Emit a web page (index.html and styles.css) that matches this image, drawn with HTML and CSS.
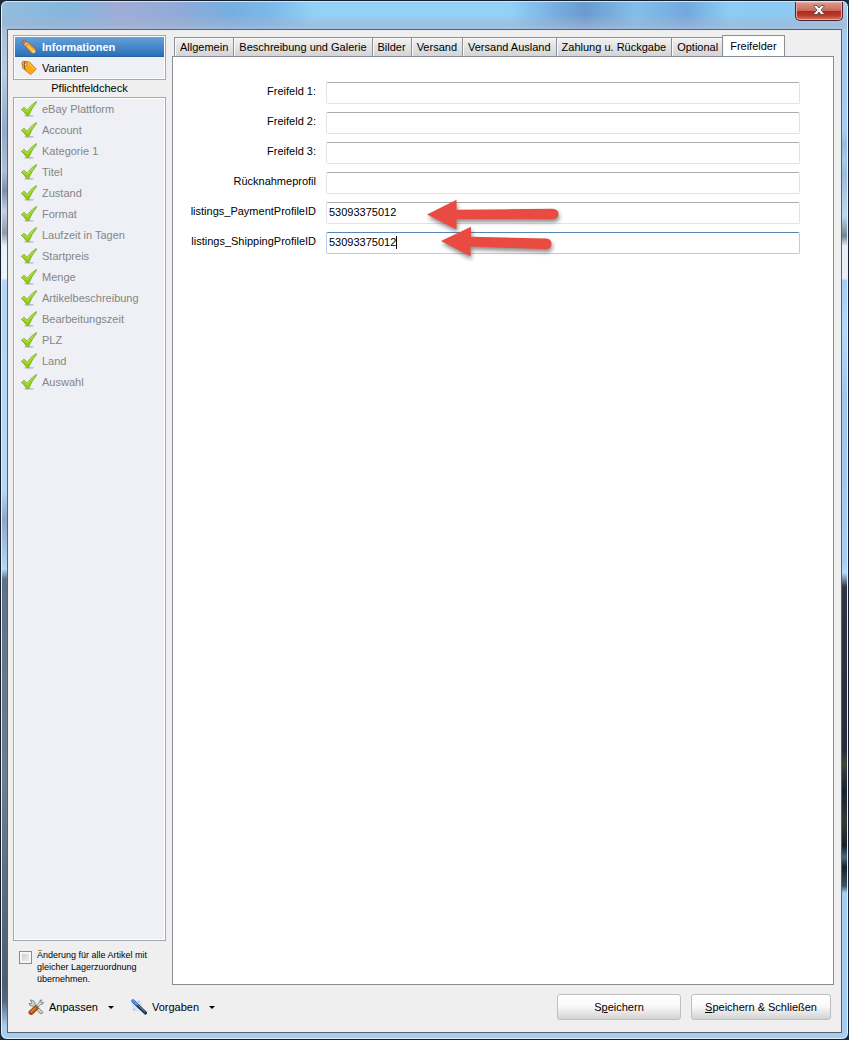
FILE: index.html
```html
<!DOCTYPE html>
<html lang="de">
<head>
  <meta charset="UTF-8">
  <title>Freifelder</title>
  <meta name="viewport" content="width=device-width, initial-scale=1.0">
  <link rel="stylesheet" href="styles.css">
</head>
<body>

  <svg width="0" height="0" class="defs" aria-hidden="true">
    <defs>
      <linearGradient id="green" x1="0" y1="0" x2="0" y2="1">
        <stop offset="0" stop-color="#a4d63a"/>
        <stop offset="1" stop-color="#8fcb0c"/>
      </linearGradient>
      <symbol id="check" viewBox="0 0 16 16">
        <ellipse cx="8" cy="14.8" rx="5" ry=".9" fill="#b9bcc0"/>
        <path d="M.4 8.400 3 6.200 6.200 9.200Q9.500 4 15.300.5L15.800 1.200Q11 6.600 7.800 14.200L5.700 14.400Q3.500 10.900.4 8.400Z" fill="url(#green)" stroke="#6fa31c" stroke-width=".7"/>
        <path d="M2 8.200 3 7.400 6.300 10.700Q9 6.300 13 3" fill="none" stroke="#c9ec6a" stroke-width=".7"/>
      </symbol>
    </defs>
  </svg>

  <div class="window">
    <header class="titlebar">
      <button class="close" aria-label="Schließen">
        <svg width="12" height="10" viewBox="0 0 12 10"><path d="M1 .5H4L6 3 8 .5H11V1.500L8 5 11 8.500V9.500H8L6 7 4 9.500H1V8.500L4 5 1 1.500Z" fill="#fff" stroke="#5a4850" stroke-width=".9"/></svg>
      </button>
    </header>

    <div class="client">
      <div class="main">
        <aside class="sidebar">
          <nav class="box">
            <a href="#" class="item active">
              <svg class="icon" viewBox="0 0 16 16">
                <path d="M1 3.500Q1.200 1.200 3.700.8L6.400 3.300 3.500 6.200Z" fill="#d8765d" stroke="#a34a35" stroke-width=".7"/>
                <path d="M3.200 5.700 6 2.900 7.300 4.200 4.500 7Z" fill="#e0e3e6" stroke="#888" stroke-width=".5"/>
                <path d="M4.300 7.200 7.500 4 14.200 10 15 15 10 13.500Z" fill="#f9a51d" stroke="#b86708" stroke-width=".7"/>
                <path d="M6.500 6.500 12 12" stroke="#ffd36b" stroke-width="1.200"/>
                <path d="M10.500 13.200 13.800 10.500 14.900 14.900Z" fill="#f4d7a0"/>
                <path d="M13 14.300 14.500 13 15 15Z" fill="#333"/>
              </svg>
              Informationen
            </a>
            <a href="#" class="item">
              <svg class="icon" viewBox="0 0 16 16">
                <path d="M1 3Q1 1.500 2.500 1.300L7.500 1.800Q8.300 2 9 2.700L14.800 8.400Q15.400 9 14.800 9.600L10.200 14.100Q9.500 14.600 8.900 14L2.200 8.600Q1.600 8 1.500 7.200Z" fill="#fba91b" stroke="#c87608" stroke-width=".9"/>
                <path d="M7.500 3.200 13.400 9" stroke="#ffd268" stroke-width="1"/>
                <circle cx="4.500" cy="4.300" r="1.200" fill="#fff" stroke="#77511a" stroke-width=".6"/>
                <path d="M3.900 1.500Q2.500 5 4.100 9.500" fill="none" stroke="#765a33" stroke-width="1"/>
              </svg>
              Varianten
            </a>
          </nav>
          <div class="caption">Pflichtfeldcheck</div>
          <ul class="box checks">
            <li class="item"><svg class="icon"><use href="#check"/></svg>eBay Plattform</li>
            <li class="item"><svg class="icon"><use href="#check"/></svg>Account</li>
            <li class="item"><svg class="icon"><use href="#check"/></svg>Kategorie 1</li>
            <li class="item"><svg class="icon"><use href="#check"/></svg>Titel</li>
            <li class="item"><svg class="icon"><use href="#check"/></svg>Zustand</li>
            <li class="item"><svg class="icon"><use href="#check"/></svg>Format</li>
            <li class="item"><svg class="icon"><use href="#check"/></svg>Laufzeit in Tagen</li>
            <li class="item"><svg class="icon"><use href="#check"/></svg>Startpreis</li>
            <li class="item"><svg class="icon"><use href="#check"/></svg>Menge</li>
            <li class="item"><svg class="icon"><use href="#check"/></svg>Artikelbeschreibung</li>
            <li class="item"><svg class="icon"><use href="#check"/></svg>Bearbeitungszeit</li>
            <li class="item"><svg class="icon"><use href="#check"/></svg>PLZ</li>
            <li class="item"><svg class="icon"><use href="#check"/></svg>Land</li>
            <li class="item"><svg class="icon"><use href="#check"/></svg>Auswahl</li>
          </ul>
          <div class="apply">
            <input type="checkbox" id="applyAll">
            <label for="applyAll">Änderung für alle Artikel mit gleicher Lagerzuordnung übernehmen.</label>
          </div>
        </aside>

        <section class="content">
          <div class="tabs" role="tablist">
            <button class="tab" role="tab">Allgemein</button>
            <button class="tab" role="tab">Beschreibung und Galerie</button>
            <button class="tab" role="tab">Bilder</button>
            <button class="tab" role="tab">Versand</button>
            <button class="tab" role="tab">Versand Ausland</button>
            <button class="tab" role="tab">Zahlung u. Rückgabe</button>
            <button class="tab" role="tab">Optional</button>
            <button class="tab selected" role="tab" aria-selected="true">Freifelder</button>
          </div>
          <form class="panel">
            <div class="row">
              <label for="f1">Freifeld 1:</label>
              <div class="field"><input type="text" id="f1"></div>
            </div>
            <div class="row">
              <label for="f2">Freifeld 2:</label>
              <div class="field"><input type="text" id="f2"></div>
            </div>
            <div class="row">
              <label for="f3">Freifeld 3:</label>
              <div class="field"><input type="text" id="f3"></div>
            </div>
            <div class="row">
              <label for="f4">Rücknahmeprofil</label>
              <div class="field"><input type="text" id="f4"></div>
            </div>
            <div class="row">
              <label for="f5">listings_PaymentProfileID</label>
              <div class="field"><input type="text" id="f5" value="53093375012"></div>
            </div>
            <div class="row">
              <label for="f6">listings_ShippingProfileID</label>
              <div class="field focused"><input type="text" id="f6" value="53093375012"><span class="caret"></span></div>
            </div>
            <svg class="arrows" width="150" height="70" viewBox="420 195 150 70" aria-hidden="true">
              <path d="M427 214.500 456.500 199.800V209.800L552.500 208.800Q558.500 209 558.500 214 558.500 219 552.500 219.200L456.500 219V229.500Z"/>
              <path d="M441 241 471 226.800V236.800L546.500 238.600Q551.500 239.300 551.500 244 551 249 546.500 249.300L470.500 246.500V256.300Z"/>
            </svg>
          </form>
        </section>
      </div>

      <footer class="footer">
        <button class="tool">
          <svg class="icon" viewBox="0 0 16 16">
            <path d="M2 1 3.800 3 3 4.800 1 4.300Q.8 7 4.400 7L12.200 14.500Q14.500 15.500 15 13.200L7.200 5.600Q7.400 1 2 1Z" fill="#c8d0cf" stroke="#6e7978" stroke-width=".8"/>
            <path d="M8.500 6 11.300 3.300Q11.500 1 14 .8L12.700 2.800 13.500 4 15.300 3Q15.500 5.700 12.500 5.600L10.200 8Z" fill="#d8dedd" stroke="#6e7978" stroke-width=".8"/>
            <path d="M1.800 15.200Q.2 14 1 12.400L7.600 6.400 10.500 9.200 4.600 15.200Q3 16.200 1.800 15.200Z" fill="#b9581a" stroke="#7d390b" stroke-width=".8"/>
            <path d="M3 13 7.600 8.600" stroke="#f0a55d" stroke-width="1"/>
          </svg>
          Anpassen
          <span class="drop"></span>
        </button>
        <button class="tool">
          <svg class="icon" viewBox="0 0 16 16">
            <circle cx="6" cy="7" r="5.500" fill="#d6e5f8"/>
            <path d="M2 2 14.500 14" stroke="#26384e" stroke-width="3.200" stroke-linecap="round"/>
            <path d="M2 1.800 5.500 5" stroke="#4f90e8" stroke-width="3" stroke-linecap="round"/>
            <path d="M5.500 4.500 14 12.800" stroke="#7f9dbd" stroke-width=".9"/>
            <path d="M8 1V4M6.500 2.500H9.500M3 9V12M1.500 10.500H4.500" stroke="#a8c9f5" stroke-width=".7"/>
          </svg>
          Vorgaben
          <span class="drop"></span>
        </button>
        <div class="actions">
          <button class="btn">S<u>p</u>eichern</button>
          <button class="btn wide"><u>S</u>peichern &amp; Schließen</button>
        </div>
      </footer>
    </div>
  </div>

</body>
</html>
```

FILE: styles.css
```css
* { box-sizing: border-box; }
body {
  margin: 0;
  background: #1b2c42;
  font-family: "Liberation Sans", Arial, sans-serif;
  font-size: 11px;
  color: #000;
}
button, input {
  font: inherit;
  color: inherit;
}
.defs {
  position: absolute;
}

/* glass frame */
.window {
  display: flex;
  flex-direction: column;
  min-height: 100vh;
  padding: 0 6px 6px;
  border: 1px solid #15202c;
  border-radius: 7px;
  box-shadow: inset 0 0 0 1px #e4f1fb;
  background:
    linear-gradient(#a9cdf0, #a9cdf0) bottom / 100% 6px no-repeat,
    linear-gradient(to bottom, #9fb4cc 0, #b9cde2 70px, #94aac8 130px, #aec0d8 170px, #7f8fa8 190px, #c3d2e4 210px, #8d9aaa 232px, #e8f1fa 245px, #eef5fb 277px, #b4d5f8 280px, #b7d7f9 490px, #8ea9cb 518px, #9fbbdd 540px, #b4d8f9 568px, #5f7386 578px, #6c7f90 780px, #4c5f70 980px, #55687a 1000px, #a9cdf0 1025px) left / 7px 100% no-repeat,
    linear-gradient(to bottom, #a3cbee 0, #a7cdf0 130px, #9bb9dc 143px, #a3cbee 160px, #9fbbdc 173px, #bcd8ee 215px, #6f8791 235px, #e6eff8 245px, #e6eff8 277px, #a5cdf3 280px, #b5d7fa 330px, #a0c5ea 400px, #a8cef4 560px, #b6d9fa 572px, #2b3640 586px, #252f39 750px, #3e4540 762px, #15212c 790px, #333b38 820px, #15212c 845px, #526a7e 856px, #15212c 866px, #3f5265 885px, #a5cdf3 892px) right / 7px 100% no-repeat,
    #a9cdf0;
}
.titlebar {
  display: flex;
  justify-content: flex-end;
  align-items: flex-start;
  height: 28px;
  margin: 0 -5px;
  padding-right: 4px;
  border-top: 1px solid #cfe6f8;
  border-radius: 6px 6px 0 0;
  background:
    linear-gradient(to bottom, rgba(255,255,255,0.05) 45%, rgba(165,182,212,0.6) 85%, rgba(175,192,215,0.7)),
    linear-gradient(to right, #8bb9dc 0, #7fb2dc 8%, #9aa9d4 14%, #8ea6d4 20%, #6faadf 27%, #74b6e8 32%, #8dd0f5 37%, #8dd0f5 60%, #72ade0 65%, #6295cc 69%, #7cbbe9 75%, #6ba4dc 81%, #86caf3 86%, #86c7f0 92%, #a0c9ea 100%);
}
.close {
  width: 48px;
  height: 19px;
  padding: 0;
  border: 1px solid #55202c;
  border-top: 0;
  border-radius: 0 0 5px 5px;
  box-shadow: inset 0 0 0 1px #e5aaa0;
  background: linear-gradient(#dc9d8f 0, #c9695c 48%, #ad271c 50%, #b93c2a 75%, #d67a5e 100%);
}
.client {
  flex: 1;
  display: flex;
  flex-direction: column;
  border: 1px solid #56636f;
  background: #efefef;
}
.main {
  flex: 1;
  display: flex;
  gap: 6px;
  padding: 5px 7px 0 5px;
}

/* sidebar */
.sidebar {
  display: flex;
  flex-direction: column;
  width: 153px;
}
.box {
  margin: 0;
  padding: 1px;
  border: 1px solid #a5a7ac;
  background: #eef0f5;
  box-shadow: inset 0 0 0 1px #fff;
}
.item {
  display: flex;
  align-items: center;
  gap: 5px;
  height: 21px;
  padding-left: 6px;
  color: #000;
  text-decoration: none;
}
.item.active {
  height: 20px;
  background: linear-gradient(#68a1d8, #2870b8);
  border-bottom: 1px solid #23619f;
  color: #fff;
  font-weight: bold;
}
.icon {
  flex: none;
  width: 16px;
  height: 16px;
}
.caption {
  height: 17px;
  line-height: 17px;
  text-align: center;
}
.checks {
  flex: 1;
  padding-top: 0;
  list-style: none;
}
.checks .item {
  color: #858585;
}
.apply {
  display: flex;
  gap: 5px;
  padding: 8px 6px 0;
  font-size: 9px;
  line-height: 12px;
}
.apply input {
  appearance: none;
  flex: none;
  width: 13px;
  height: 13px;
  margin: 2px 0 0;
  border: 1px solid #8b8b8b;
  box-shadow: inset 0 0 0 2px #f6f6f6;
  background: linear-gradient(135deg, #c2c6cc, #f6f6f6);
}

/* tabs */
.content {
  flex: 1;
  display: flex;
  flex-direction: column;
  min-width: 0;
}
.tabs {
  display: flex;
  align-items: flex-end;
  height: 21px;
  padding-left: 2px;
}
.tab {
  height: 19px;
  padding: 0 5px;
  border: 1px solid #8c8e98;
  border-width: 1px 1px 0 0;
  box-shadow: inset 1px 1px 0 #fafafa;
  background: linear-gradient(#f2f2f2, #d4d4d4);
  white-space: nowrap;
}
.tab:first-child {
  border-left-width: 1px;
}
.tab.selected {
  position: relative;
  height: 22px;
  margin: 0 0 -1px -2px;
  padding: 0 7px 2px;
  border-left-width: 1px;
  background: #fff;
}
.panel {
  flex: 1;
  position: relative;
  padding: 25px 33px 0 17px;
  border: 1px solid #898c95;
  background: #fff;
}

/* form */
.row {
  display: flex;
  gap: 10px;
  height: 22px;
  margin-bottom: 8px;
}
.row label {
  width: 126px;
  line-height: 18px;
  text-align: right;
  white-space: nowrap;
}
.field {
  flex: 1;
  position: relative;
}
.field input {
  display: block;
  width: 100%;
  height: 22px;
  padding: 0 2px 2px;
  border: 1px solid #e2e3ea;
  border-top-color: #abadb3;
  border-radius: 2px;
  outline: 0;
  background: #fff;
}
.field.focused input {
  border-color: #b5cfe7;
  border-top-color: #5b87ae;
}
.caret {
  position: absolute;
  top: 4px;
  left: 70px;
  width: 1px;
  height: 13px;
  background: #000;
}
.arrows {
  position: absolute;
  top: 138px;
  left: 247px;
  fill: #e94b43;
  filter: drop-shadow(1px 3px 2px rgba(0,0,0,0.45));
}

/* footer */
.footer {
  display: flex;
  align-items: center;
  gap: 17px;
  padding: 9px 10px 12px 20px;
}
.tool {
  display: flex;
  align-items: center;
  gap: 5px;
  padding: 0;
  border: 0;
  background: none;
}
.drop {
  margin-left: 5px;
  border: 3px solid transparent;
  border-top-color: #000;
  border-bottom: 0;
}
.actions {
  display: flex;
  gap: 10px;
  margin-left: auto;
}
.btn {
  width: 124px;
  height: 26px;
  padding: 0;
  border: 1px solid #bfbfbf;
  border-radius: 3px;
  background: linear-gradient(#fff 0, #fafafa 45%, #d3d3d3 100%);
}
.btn.wide {
  width: 140px;
}
```
